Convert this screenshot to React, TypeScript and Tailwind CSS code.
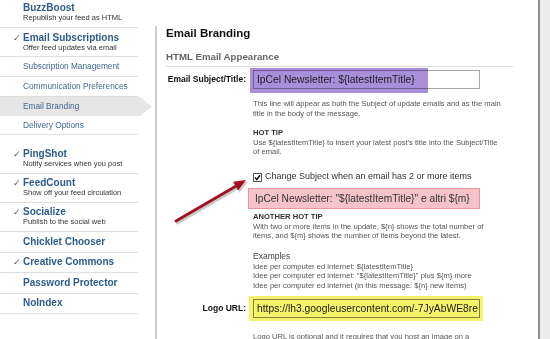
import React from "react";

const Check = () => (
  <span className="w-[23px] shrink-0 pl-[13px] text-[9px] leading-[12px] text-[#555] font-['DejaVu_Sans',sans-serif]">✓</span>
);

function MainItem({
  title,
  sub,
  check,
  pad,
}: {
  title: string;
  sub?: string;
  check?: boolean;
  pad: string;
}) {
  return (
    <div className={`w-[138px] border-b border-[#dedede] ${pad}`}>
      <div className="flex items-start">
        {check ? <Check /> : <span className="w-[23px] shrink-0" />}
        <div className="whitespace-nowrap">
          <div className="text-[10px] leading-[12px] font-bold text-[#2d5c8c]">{title}</div>
          {sub && <div className="text-[7.5px] leading-[8px] text-[#333]">{sub}</div>}
        </div>
      </div>
    </div>
  );
}

function SubItem({ label, h }: { label: string; h: string }) {
  return (
    <div className={`w-[138px] border-b border-[#dedede] flex items-center pl-[23px] ${h}`}>
      <span className="text-[8.3px] text-[#41678f] whitespace-nowrap">{label}</span>
    </div>
  );
}

export default function App() {
  return (
    <div className="relative flex w-[550px] h-[339px] overflow-hidden bg-white font-['Liberation_Sans',Arial,sans-serif]">
      {/* Sidebar */}
      <div className="w-[155px] shrink-0 flex flex-col">
        <MainItem title="BuzzBoost" sub="Republish your feed as HTML" pad="pt-[2px] pb-[5px]" />
        <MainItem title="Email Subscriptions" sub="Offer feed updates via email" check pad="pt-[4px] pb-[4px]" />
        <SubItem label="Subscription Management" h="h-[20px]" />
        <SubItem label="Communication Preferences" h="h-[20px]" />
        <div className="w-[152px] h-[19px] bg-[#e6e6e6] flex items-center pl-[23px] [clip-path:polygon(0_0,140px_0,152px_50%,140px_100%,0_100%)]">
          <span className="text-[8.3px] text-[#41678f] whitespace-nowrap">Email Branding</span>
        </div>
        <SubItem label="Delivery Options" h="h-[19px]" />
        <MainItem title="PingShot" sub="Notify services when you post" check pad="pt-[13px] pb-[5px]" />
        <MainItem title="FeedCount" sub="Show off your feed circulation" check pad="pt-[3px] pb-[5px]" />
        <MainItem title="Socialize" sub="Publish to the social web" check pad="pt-[3px] pb-[5px]" />
        <MainItem title="Chicklet Chooser" pad="pt-[4px] pb-[4px]" />
        <MainItem title="Creative Commons" check pad="pt-[3px] pb-[4px]" />
        <MainItem title="Password Protector" pad="pt-[4px] pb-[4px]" />
        <MainItem title="NoIndex" pad="pt-[3px] pb-[4px]" />
      </div>

      {/* Main panel */}
      <div className="w-[383px] shrink-0 pt-[8px]">
        <div className="h-full border-l-2 border-[#cfcfcf] pl-[9px]">
          <div className="mt-[18px] text-[11.5px] leading-[14px] font-bold text-[#111]">Email Branding</div>
          <div className="mt-[11px] w-[347px] pb-[3px] border-b border-[#dedede] text-[9.7px] leading-[12px] font-bold text-[#666]">
            HTML Email Appearance
          </div>

          {/* Subject row */}
          <div className="mt-[3px] flex items-center">
            <div className="w-[80px] text-right text-[8.5px] font-bold text-[#111] whitespace-nowrap">Email Subject/Title:</div>
            <div className="relative ml-[7px] w-[227px] h-[19px] border border-[#a8a8a8] bg-white pl-[3px] text-[10.3px] leading-[17px] text-[#333] whitespace-nowrap overflow-visible">
              IpCel Newsletter: ${"{latestItemTitle}"}
              <div className="absolute -top-[3px] -bottom-[5px] -left-[4px] w-[178px] bg-[#a98ed9] mix-blend-multiply" />
            </div>
          </div>

          {/* Help block */}
          <div className="ml-[87px] mt-[10px] text-[7.6px] leading-[9.5px] text-[#555] whitespace-nowrap">
            <div>This line will appear as both the Subject of update emails and as the main</div>
            <div>title in the body of the message.</div>
            <div className="mt-[10px] font-bold text-[#333]">HOT TIP</div>
            <div>Use ${"{latestItemTitle}"} to insert your latest post's title into the Subject/Title</div>
            <div>of email.</div>

            <div className="mt-[14.5px] h-[12px] flex items-center">
              <div className="w-[9px] h-[9px] border border-[#555] bg-white flex items-center justify-center">
                <svg width="7" height="7" viewBox="0 0 7 7">
                  <path d="M1 3.5 L2.8 5.5 L6 1.2" stroke="#111" strokeWidth="1.5" fill="none" />
                </svg>
              </div>
              <span className="ml-[3px] text-[9px] text-[#333]">Change Subject when an email has 2 or more items</span>
            </div>

            <div className="mt-[5px] -ml-[5px] w-[232px] h-[21px] bg-[#f6c3c9] border border-[#e8959f] pl-[6px] text-[10.2px] leading-[19px] text-[#333] overflow-hidden">
              IpCel Newsletter: "${"{latestItemTitle}"}" e altri ${"{m}"}
            </div>

            <div className="mt-[3px] font-bold text-[#333]">ANOTHER HOT TIP</div>
            <div>With two or more items in the update, ${"{n}"} shows the total number of</div>
            <div>items, and ${"{m}"} shows the number of items beyond the latest.</div>

            <div className="mt-[11.5px] text-[8.5px] text-[#444]">Examples</div>
            <div>Idee per computer ed internet: ${"{latestItemTitle}"}</div>
            <div>Idee per computer ed internet: "${"{latestItemTitle}"}" plus ${"{m}"} more</div>
            <div>Idee per computer ed internet (in this message: ${"{n}"} new items)</div>
          </div>

          {/* Logo URL row */}
          <div className="mt-[9px] flex items-center">
            <div className="w-[80px] text-right text-[8.5px] font-bold text-[#111] whitespace-nowrap">Logo URL:</div>
            <div className="relative ml-[7px] w-[227px] h-[19px] border border-[#8a8a8a] bg-white pl-[3px] text-[10.3px] leading-[17px] text-[#222] whitespace-nowrap">
              <div className="overflow-hidden">https://lh3.googleusercontent.com/-7JyAbWE8re</div>
              <div className="absolute -top-[4px] -bottom-[4px] -left-[5px] -right-[4px] bg-[#f5f26c] mix-blend-multiply" />
            </div>
          </div>

          <div className="ml-[87px] mt-[14px] text-[7.6px] leading-[9.5px] text-[#555] whitespace-nowrap">
            Logo URL is optional and it requires that you host an image on a
          </div>
        </div>
      </div>

      {/* Right strip */}
      <div className="w-[12px] shrink-0 border-l-2 border-[#8f8f8f] bg-[#ececec]" />

      {/* Red arrow annotation */}
      <svg className="absolute left-0 top-0 pointer-events-none" width="550" height="339" viewBox="0 0 550 339">
        <g opacity="0.35" transform="translate(1.5,2)">
          <line x1="176" y1="221" x2="237" y2="185.5" stroke="#666" strokeWidth="3" strokeLinecap="round" />
          <polygon points="246,180 233.1,181.8 238.1,190.4" fill="#666" />
        </g>
        <line x1="176" y1="221" x2="237" y2="185.5" stroke="#a1101e" strokeWidth="2.8" strokeLinecap="round" />
        <polygon points="246,180 233.1,181.8 238.1,190.4" fill="#a1101e" />
      </svg>
    </div>
  );
}
